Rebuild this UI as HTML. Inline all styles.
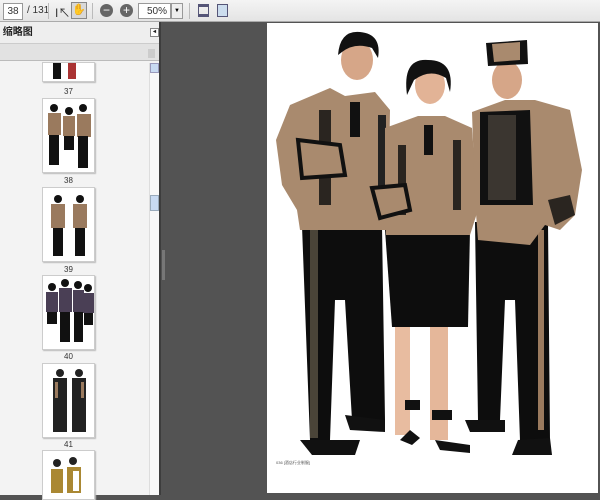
<!DOCTYPE html>
<html><head><meta charset="utf-8"><style>
*{margin:0;padding:0;box-sizing:border-box}
body{width:600px;height:495px;overflow:hidden;background:#535353;font-family:"Liberation Sans","Noto Sans CJK SC",sans-serif;position:relative}
.tb{position:absolute;left:0;top:0;width:600px;height:22px;background:linear-gradient(#f4f4f4,#e4e4e4);border-bottom:1px solid #aaa}
.box{position:absolute;background:#fff;border:1px solid #999;font-size:10px;color:#333;text-align:center;line-height:15px}
.panel{position:absolute;left:0;top:22px;width:161px;height:473px;background:#f3f3f3;border-right:2px solid #3d3d3d}
.ph{height:22px;border-bottom:1px solid #ccc;background:#eee;font-size:10px;font-weight:bold;line-height:22px;color:#222}
.ph2{height:17px;border-bottom:1px solid #bbb;background:#e2e2e2}
.sb{position:absolute;left:149px;top:41px;width:10px;height:432px;background:#f8f8f8;border-left:1px solid #ddd}
.th{position:absolute;left:42px;width:53px;background:#fff;border:1px solid #ccc;box-shadow:1px 1px 1px #bbb;overflow:hidden}
.lb{position:absolute;left:42px;width:53px;text-align:center;font-size:8px;color:#333}
.page{position:absolute;left:267px;top:23px;width:331px;height:470px;background:#fff}
</style></head><body>
<div class="tb">
 <div class="box" style="left:3px;top:3px;width:20px;height:17px">38</div>
 <div style="position:absolute;left:27px;top:5px;font-size:10px;color:#333">/ 131</div>
 <div style="position:absolute;left:48px;top:3px;width:1px;height:16px;background:#bbb"></div>
 <div style="position:absolute;left:55px;top:4px;font-size:12px;color:#333">I&#x2196;</div>
 <div style="position:absolute;left:71px;top:2px;width:16px;height:17px;border:1px solid #888;background:#d8d8d8;font-size:11px;text-align:center">✋</div>
 <div style="position:absolute;left:92px;top:3px;width:1px;height:16px;background:#bbb"></div>
 <div style="position:absolute;left:100px;top:4px;width:13px;height:13px;border-radius:50%;background:#666;color:#fff;font-size:12px;line-height:12px;text-align:center">−</div>
 <div style="position:absolute;left:120px;top:4px;width:13px;height:13px;border-radius:50%;background:#666;color:#fff;font-size:12px;line-height:12px;text-align:center">+</div>
 <div class="box" style="left:138px;top:3px;width:33px;height:16px;text-align:right;padding-right:3px">50%</div>
 <div style="position:absolute;left:171px;top:3px;width:12px;height:16px;border:1px solid #999;background:#eee;font-size:6px;text-align:center;line-height:14px">▼</div>
 <div style="position:absolute;left:189px;top:3px;width:1px;height:16px;background:#bbb"></div>
 <div style="position:absolute;left:198px;top:4px;width:11px;height:13px;border:2px solid #557;border-width:3px 1px"></div>
 <div style="position:absolute;left:217px;top:4px;width:11px;height:13px;border:1px solid #557;background:#cde"></div>
</div>
<div class="panel">
 <div class="ph">&nbsp;缩略图<span style="position:absolute;left:150px;top:6px;width:9px;height:9px;border:1px solid #888;font-size:6px;line-height:7px;text-align:center;background:#fff">◂</span></div>
 <div class="ph2"><span style="position:absolute;left:148px;top:27px;width:7px;height:9px;background:#ccc"></span></div>
 <div class="sb"><div style="height:10px;background:#c8daf2;border:1px solid #99b"></div><div style="position:absolute;top:132px;left:0;width:9px;height:16px;background:#c8daf2;border:1px solid #9ab"></div></div>
 <div class="th" style="top:40px;height:20px"><div style="position:absolute;left:10px;top:0;width:8px;height:16px;background:#111"></div><div style="position:absolute;left:25px;top:0;width:8px;height:16px;background:#a33"></div></div>
 <div class="lb" style="top:65px">37</div>
 <div class="th" style="top:76px;height:75px"><svg width="53" height="75"><g fill="#9a7a5e"><rect x="5" y="14" width="13" height="22"/><rect x="20" y="17" width="12" height="20"/><rect x="34" y="15" width="14" height="23"/></g><g fill="#111"><circle cx="11" cy="9" r="4"/><circle cx="26" cy="12" r="4"/><circle cx="40" cy="9" r="4"/><rect x="6" y="36" width="10" height="30"/><rect x="21" y="37" width="10" height="14"/><rect x="35" y="37" width="10" height="32"/></g></svg></div>
 <div class="lb" style="top:154px">38</div>
 <div class="th" style="top:165px;height:75px"><svg width="53" height="75"><g fill="#9a7a5e"><rect x="8" y="16" width="14" height="24"/><rect x="30" y="16" width="14" height="24"/></g><g fill="#111"><circle cx="15" cy="11" r="4"/><circle cx="37" cy="11" r="4"/><rect x="10" y="40" width="10" height="28"/><rect x="32" y="40" width="10" height="28"/></g></svg></div>
 <div class="lb" style="top:243px">39</div>
 <div class="th" style="top:253px;height:75px"><svg width="53" height="75"><g fill="#4a3f55"><rect x="3" y="16" width="12" height="20"/><rect x="16" y="12" width="13" height="24"/><rect x="30" y="14" width="11" height="22"/><rect x="40" y="17" width="11" height="20"/></g><g fill="#111"><circle cx="9" cy="11" r="4"/><circle cx="22" cy="7" r="4"/><circle cx="35" cy="9" r="4"/><circle cx="45" cy="12" r="4"/><rect x="17" y="36" width="10" height="30"/><rect x="31" y="36" width="9" height="30"/><rect x="4" y="36" width="10" height="12"/><rect x="41" y="37" width="9" height="12"/></g></svg></div>
 <div class="lb" style="top:330px">40</div>
 <div class="th" style="top:341px;height:75px"><svg width="53" height="75"><g fill="#222"><circle cx="17" cy="9" r="4"/><circle cx="36" cy="9" r="4"/><rect x="10" y="14" width="14" height="54"/><rect x="29" y="14" width="14" height="54"/></g><g fill="#9a7a5e"><rect x="12" y="18" width="3" height="16"/><rect x="38" y="18" width="3" height="16"/></g></svg></div>
 <div class="lb" style="top:418px">41</div>
 <div class="th" style="top:428px;height:50px"><svg width="53" height="50"><g fill="#222"><circle cx="14" cy="12" r="4"/><circle cx="30" cy="10" r="4"/></g><g fill="#a83"><rect x="8" y="18" width="12" height="24"/><rect x="24" y="16" width="14" height="26"/></g><rect x="30" y="20" width="6" height="20" fill="#fff"/></svg></div>
</div>
<div style="position:absolute;left:162px;top:250px;width:3px;height:30px;background:#777"></div>
<div class="page">
<svg width="331" height="470" viewBox="267 23 331 470" style="position:absolute;left:0;top:0">
 <!-- left man -->
 <path d="M302 226 L382 226 L385 420 L352 420 L345 300 L335 300 L330 440 L310 440 Z" fill="#0d0d0d"/>
 <rect x="310" y="228" width="8" height="210" fill="#4a4438"/>
 <path d="M300 440 L360 440 L355 455 L312 455 Z" fill="#111"/>
 <path d="M345 415 L385 420 L385 432 L350 430 Z" fill="#111"/>
 <path d="M290 105 L330 88 L345 96 L375 92 L390 110 L388 230 L300 230 L297 210 L282 185 L276 140 Z" fill="#a98a6e"/>
 <rect x="319" y="110" width="12" height="95" fill="#2a2520"/>
 <rect x="350" y="102" width="10" height="35" fill="#111"/>
 <rect x="378" y="115" width="8" height="80" fill="#222"/>
 <path d="M298 140 L340 145 L345 175 L302 178 Z" fill="#a98a6e" stroke="#111" stroke-width="4"/>
 <ellipse cx="357" cy="60" rx="16" ry="20" fill="#d6a688"/>
 <path d="M338 55 Q340 30 360 32 Q382 34 378 58 L372 48 Q355 42 342 52 Z" fill="#111"/>
 <!-- woman -->
 <rect x="395" y="320" width="15" height="115" fill="#e8bca0"/>
 <rect x="430" y="320" width="18" height="120" fill="#e5b79a"/>
 <path d="M385 230 L470 230 L468 327 L392 327 Z" fill="#0d0d0d"/>
 <path d="M405 400 h15 v10 h-15z M432 410 h20 v10 h-20z" fill="#111"/>
 <path d="M410 430 L420 438 L412 445 L400 440 Z M435 440 L470 445 L470 453 L440 450 Z" fill="#111"/>
 <path d="M385 128 L418 116 L445 116 L472 128 L478 210 L470 235 L386 235 L385 200 Z" fill="#a98a6e"/>
 <rect x="424" y="125" width="9" height="30" fill="#111"/>
 <rect x="398" y="145" width="8" height="70" fill="#2a2520"/>
 <rect x="453" y="140" width="8" height="70" fill="#2a2520"/>
 <path d="M372 188 L405 185 L410 210 L380 218 Z" fill="#a98a6e" stroke="#111" stroke-width="4"/>
 <ellipse cx="430" cy="85" rx="15" ry="19" fill="#e2b396"/>
 <path d="M407 95 Q402 58 428 60 Q455 60 450 92 L446 78 Q430 68 414 80 Z" fill="#111"/>
 <!-- right man -->
 <path d="M475 222 L548 222 L550 440 L520 440 L515 300 L505 300 L500 420 L478 420 Z" fill="#0d0d0d"/>
 <rect x="538" y="230" width="6" height="200" fill="#9a7a5e"/>
 <path d="M465 420 L505 420 L505 432 L470 432 Z M518 440 L550 438 L552 455 L512 455 Z" fill="#111"/>
 <path d="M472 112 L505 100 L535 100 L570 110 L582 170 L575 215 L560 230 L545 225 L530 245 L478 240 L475 200 Z" fill="#a98a6e"/>
 <path d="M480 112 L530 110 L533 205 L480 205 Z" fill="#111"/>
 <rect x="488" y="115" width="28" height="85" fill="#3b3630"/>
 <path d="M548 200 L570 195 L575 215 L555 225 Z" fill="#2a2520"/>
 <ellipse cx="507" cy="80" rx="15" ry="19" fill="#d6a688"/>
 <path d="M486 43 L527 40 L528 64 L488 66 Z" fill="#111"/>
 <path d="M492 44 L520 42 L520 60 L494 62 Z" fill="#a98a6e"/>
 <text x="276" y="464" font-size="4" fill="#555">036 [酒店行业制服]</text>
</svg>
</div>
</body></html>
